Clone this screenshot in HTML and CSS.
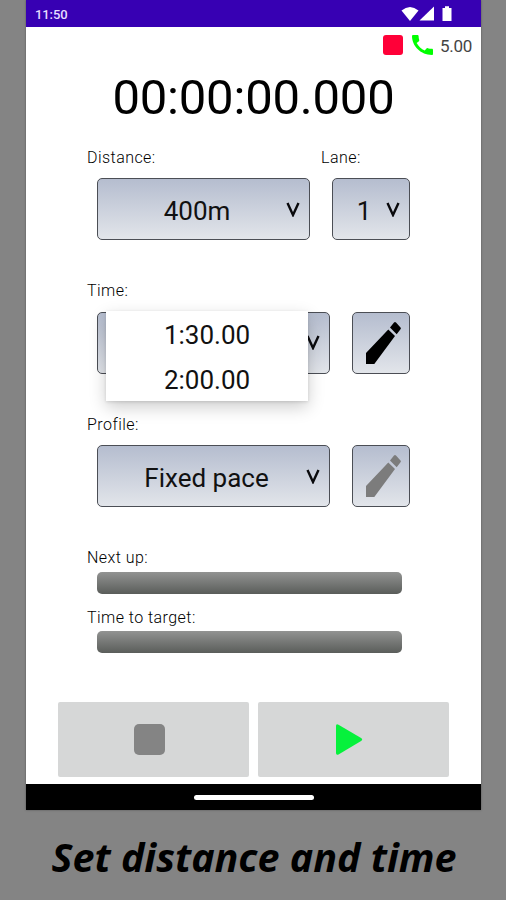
FILE: index.html
```html
<!DOCTYPE html>
<html lang="en">
<head>
<meta charset="utf-8">
<title>Set distance and time</title>
<link rel="stylesheet" href="styles.css">
</head>
<body>
<main class="phone">
  <header class="status">
    <span class="clock">11:50</span>
    <svg class="status-icons" width="52" height="18" viewBox="0 0 52 18" fill="#fff">
      <path d="M0.500 4.500Q9 -2.500 17.500 4.500L9 15z"/>
      <path d="M33 0.500V14.500H18.500z"/>
      <path d="M41.500 2h2.500V0.300h4V2h2.500V15H41.500z"/>
    </svg>
  </header>
  <section class="app">
    <div class="indicators">
      <span class="record"></span>
      <svg class="call" width="21" height="20" viewBox="3 3 18 18" preserveAspectRatio="none" fill="#0f0"><path d="M20.010 15.380c-1.230 0-2.420-.2-3.530-.56-.35-.12-.74-.03-1.010.24l-1.570 1.970c-2.830-1.350-5.480-3.900-6.890-6.830l1.950-1.660c.27-.28.35-.67.24-1.020-.37-1.110-.56-2.300-.56-3.530 0-.54-.45-.99-.99-.99H4.190C3.650 3 3 3.240 3 3.990 3 13.280 10.730 21 20.010 21c.71 0 .99-.63.990-1.180v-3.450c0-.54-.45-.99-.99-.99z"/></svg>
      <span class="value">5.00</span>
    </div>
    <div class="timer">00:00:00.000</div>
    <div class="form">
      <div class="row row-distance">
        <div class="field"><label>Distance:</label><button class="box distance"><span>400m</span><svg class="chev" viewBox="0 0 14 15"><path d="M1.500 1L7 13L12.500 1"/></svg></button></div>
        <div class="field lane-field"><label>Lane:</label><button class="box lane"><span>1</span><svg class="chev" viewBox="0 0 14 15"><path d="M1.500 1L7 13L12.500 1"/></svg></button></div>
      </div>
      <div class="row">
        <div class="field"><label>Time:</label><button class="box wide"><span></span><svg class="chev" viewBox="0 0 14 15"><path d="M1.500 1L7 13L12.500 1"/></svg></button>
          <div class="menu"><div>1:30.00</div><div>2:00.00</div></div>
        </div>
        <button class="box edit"><svg width="36" height="44" viewBox="0 0 36 44"><path d="M1 43V32L23.300 8.500L30 15L9.300 43zM25 6.500L29 1.500Q30 .5 31 1.500L35.500 6.500Q36.300 7.300 35.500 8.300L31.700 13.300z"/></svg></button>
      </div>
      <div class="row">
        <div class="field"><label>Profile:</label><button class="box wide"><span>Fixed pace</span><svg class="chev" viewBox="0 0 14 15"><path d="M1.500 1L7 13L12.500 1"/></svg></button></div>
        <button class="box edit disabled"><svg width="36" height="44" viewBox="0 0 36 44"><path d="M1 43V32L23.300 8.500L30 15L9.300 43zM25 6.500L29 1.500Q30 .5 31 1.500L35.500 6.500Q36.300 7.300 35.500 8.300L31.700 13.300z"/></svg></button>
      </div>
      <div class="meter"><label>Next up:</label><div class="bar"></div></div>
      <div class="meter"><label>Time to target:</label><div class="bar"></div></div>
    </div>
    <div class="controls">
      <button class="control"><span class="stop"></span></button>
      <button class="control"><svg width="28" height="33" viewBox="0 0 28 33"><path d="M1 3Q1 .5 3.500 1.800L26.500 15.300Q28 16.500 26.500 17.700L3.500 31.500Q1 32.500 1 30z" fill="#06f13c"/></svg></button>
    </div>
  </section>
  <footer class="nav"><span></span></footer>
</main>
<p class="caption">Set distance and time</p>
</body>
</html>
```
FILE: styles.css
```css
* { box-sizing: border-box; }
body { margin: 0; width: 506px; height: 900px; overflow: hidden; background: #848484; font-family: Roboto, sans-serif; color: #111; }
button { font: inherit; color: inherit; padding: 0; border: 0; }
.phone { width: 455px; height: 810px; margin-left: 26px; background: #fff; display: flex; flex-direction: column; box-shadow: 0 0 2px #555; }
.status { height: 26.500px; background: #3700b3; display: flex; justify-content: space-between; padding: 6px 26px 0 9px; }
.clock { color: #e6ddff; font-size: 13px; line-height: 17px; font-weight: 500; letter-spacing: -.1px; }
.status-icons { margin-right: 2px; }
.app { flex: 1; }
.indicators { height: 37px; display: flex; justify-content: flex-end; align-items: center; padding-right: 9px; }
.record { width: 20px; height: 20px; border-radius: 3px; background: #ff0038; margin-right: 9px; }
.value { font-size: 17px; color: #444; margin-left: 7px; width: 32px; white-space: nowrap; letter-spacing: -.3px; line-height: 20px; padding-top: 1px; }
.timer { height: 70px; line-height: 68px; font-size: 49px; letter-spacing: -.2px; text-align: center; color: #000; white-space: nowrap; }
.form { padding: 12px 71px 0 61px; }
.row { display: flex; align-items: flex-start; height: 133.500px; }
.field { position: relative; display: flex; flex-direction: column; align-items: flex-start; }
label { display: block; font-size: 16px; line-height: 24px; height: 32.500px; letter-spacing: .45px; font-weight: 300; color: #000; white-space: nowrap; }
.box { height: 62px; margin-left: 10px; border: 1px solid #4b4e55; border-radius: 5px; background: linear-gradient(#b5bdcf, #e2e5ea); display: flex; align-items: center; font-size: 26px; }
.box > span { flex: 1; text-align: center; padding-top: 3px; }
.chev { width: 14px; height: 15px; margin-right: 9px; fill: none; stroke: #0a0a0d; stroke-width: 2.400; }
.distance { width: 213px; }
.distance > span { padding-left: 10px; }
.lane-field { margin-left: 11px; }
.lane { width: 78px; margin-left: 11px; }
.lane > span { padding-left: 9px; }
.lane .chev { margin-right: 9px; }
.wide { width: 233px; }
.wide > span { padding-left: 9px; }
.edit { width: 58px; margin: 32.500px 0 0 22px; justify-content: center; padding-left: 4px; }
.disabled svg { fill: #7c7c7c; }
.menu { position: absolute; left: 19px; top: 32px; width: 202px; height: 90px; background: #fff; font-size: 26px; line-height: 44.500px; padding-top: 2px; text-align: center; box-shadow: 0 6px 16px rgba(0,0,0,.2), 0 1px 3px rgba(0,0,0,.12); }
.meter { height: 59.500px; }
.meter label { height: 25.500px; }
.bar { height: 22px; width: 305px; margin-left: 10px; border-radius: 5px; background: linear-gradient(#929392, #5a5d5a); }
.controls { display: flex; gap: 9px; padding: 0 32px; margin-top: 36.500px; }
.control { flex: 1; height: 75px; background: #d6d7d7; border-radius: 2px; display: flex; align-items: center; justify-content: center; }
.stop { width: 31px; height: 31px; border-radius: 5px; background: #848484; margin-right: 8px; }
.control svg { margin-right: 10px; }
.nav { height: 26px; background: #000; display: flex; align-items: center; justify-content: center; }
.nav span { width: 120px; height: 5px; border-radius: 3px; background: #fff; }
.caption { margin: 20px 0 0 2px; text-align: center; font: italic 700 39.500px/54px "Noto Sans", sans-serif; color: #000; white-space: nowrap; }
```
